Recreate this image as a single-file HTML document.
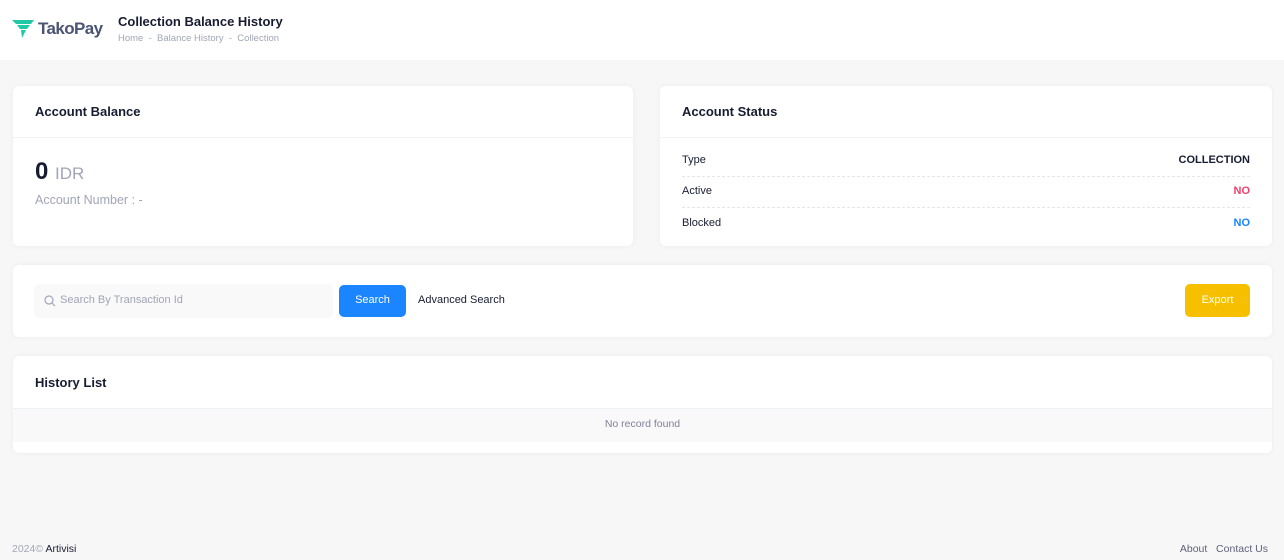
<!DOCTYPE html>
<html><head><style>
*{box-sizing:border-box;margin:0;padding:0}
body{width:1284px;height:560px;background:#f8f7f7;font-family:"Liberation Sans",sans-serif;position:relative;overflow:hidden;color:#181c32}
.hdr{position:absolute;left:0;top:0;width:1284px;height:60px;background:#fff}
.card{position:absolute;background:#fff;border-radius:6px;box-shadow:0 0 6px rgba(0,0,0,.05)}
.ct{position:absolute;left:22px;font-size:13px;font-weight:bold}
.line{position:absolute;left:0;right:0;height:1px;background:#eff2f5}
.row{position:absolute;left:22px;right:22px;font-size:11px;display:flex;justify-content:space-between}
.dash{position:absolute;left:22px;right:22px;border-top:1px dashed #e4e6ef}
</style></head><body>
<div class="hdr">
<svg style="position:absolute;left:12px;top:19px" width="24" height="20" viewBox="0 0 24 20"><path d="M0 1h22l-3 4H4z M5 6h13l-3 4H8z M9 11h5l-4 8z" fill="#1fc9a6"/></svg>
<div style="position:absolute;left:38px;top:19px;font-size:17px;font-weight:bold;color:#4a5474;letter-spacing:-0.6px">TakoPay</div>
<div style="position:absolute;left:118px;top:14px;font-size:13px;font-weight:bold;color:#181c32">Collection Balance History</div>
<div style="position:absolute;left:118px;top:33px;font-size:9.5px;color:#a1a5b7">Home &nbsp;-&nbsp; Balance History &nbsp;-&nbsp; Collection</div>
</div>
<div class="card" style="left:13px;top:86px;width:620px;height:160px">
<div class="ct" style="top:18px">Account Balance</div>
<div class="line" style="top:51px"></div>
<div style="position:absolute;left:22px;top:72px;font-size:24px;font-weight:bold;color:#181c32">0 <span style="font-weight:normal;font-size:17px;color:#a1a5b7">IDR</span></div>
<div style="position:absolute;left:22px;top:107px;font-size:12.5px;color:#a1a5b7">Account Number : -</div>
</div>
<div class="card" style="left:660px;top:86px;width:612px;height:160px">
<div class="ct" style="top:18px">Account Status</div>
<div class="line" style="top:51px"></div>
<div class="row" style="top:68px"><span>Type</span><b>COLLECTION</b></div>
<div class="dash" style="top:90px"></div>
<div class="row" style="top:99px"><span>Active</span><b style="color:#f1416c">NO</b></div>
<div class="dash" style="top:121px"></div>
<div class="row" style="top:131px"><span>Blocked</span><b style="color:#1b84ff">NO</b></div>
</div>
<div class="card" style="left:13px;top:265px;width:1259px;height:72px">
<div style="position:absolute;left:21px;top:19px;width:299px;height:34px;background:#f9f9f9;border-radius:5px">
<svg style="position:absolute;left:10px;top:11px" width="12" height="12" viewBox="0 0 12 12"><circle cx="5" cy="5" r="4" fill="none" stroke="#a1a5b7" stroke-width="1.2"/><path d="M8 8l3 3" stroke="#a1a5b7" stroke-width="1.2"/></svg>
<span style="position:absolute;left:26px;top:10px;font-size:11px;color:#a1a5b7">Search By Transaction Id</span></div>
<div style="position:absolute;left:326px;top:20px;width:67px;height:32px;background:#1b84ff;border-radius:5px;color:#fff;font-size:11px;text-align:center;line-height:30px">Search</div>
<div style="position:absolute;left:405px;top:29px;font-size:11px;color:#181c32">Advanced Search</div>
<div style="position:absolute;left:1172px;top:19px;width:65px;height:33px;background:#f6c000;border-radius:5px;color:#fff;font-size:11px;text-align:center;line-height:33px">Export</div>
</div>
<div class="card" style="left:13px;top:356px;width:1259px;height:97px">
<div class="ct" style="top:19px">History List</div>
<div class="line" style="top:52px"></div>
<div style="position:absolute;left:0;right:0;top:53px;height:33px;background:#f9f9f9;font-size:10.5px;color:#7e8299;text-align:center;line-height:30px">No record found</div>
</div>
<div style="position:absolute;left:12px;top:543px;font-size:10.5px;color:#a1a5b7">2024© <span style="color:#181c32">Artivisi</span></div>
<div style="position:absolute;right:16px;top:543px;font-size:10.5px;color:#5e6278">About &nbsp;&nbsp;Contact Us</div>
</body></html>
